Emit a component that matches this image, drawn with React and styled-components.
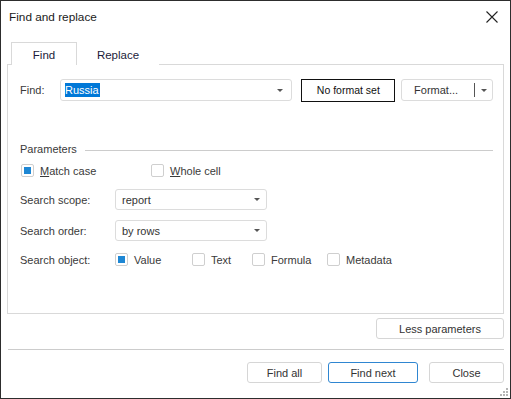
import React from 'react';
import styled, { createGlobalStyle } from 'styled-components';

const GlobalStyle = createGlobalStyle`
  html, body {
    margin: 0;
    padding: 0;
    background: #ffffff;
  }
  body {
    font-family: "Liberation Sans", Arial, sans-serif;
    color: #333333;
  }
`;

const Window = styled.div`
  box-sizing: border-box;
  width: 511px;
  height: 399px;
  border: 1px solid #2d2d2d;
  background: #ffffff;
  display: flex;
  flex-direction: column;
  position: relative;
`;

const TitleBar = styled.div`
  height: 31px;
  display: flex;
  align-items: center;
  justify-content: space-between;
  padding: 0 11px 0 8px;
  font-size: 11.8px;
  color: #1a1a1a;
`;

const CloseButton = styled.button`
  border: none;
  background: none;
  padding: 0;
  width: 14px;
  height: 14px;
  display: flex;
  align-items: center;
  justify-content: center;
  cursor: pointer;
`;

const Body = styled.div`
  padding: 0 6px;
  display: flex;
  flex-direction: column;
`;

const Tabs = styled.div`
  display: flex;
  margin-top: 10px;
  padding-left: 4px;
  position: relative;
  z-index: 1;
`;

const Tab = styled.div`
  box-sizing: border-box;
  width: ${p => p.$width}px;
  height: 23px;
  margin-bottom: -1px;
  display: flex;
  align-items: center;
  justify-content: center;
  font-size: 11.5px;
  color: #1c1c3a;
  background: #ffffff;
  border: 1px solid ${p => (p.$active ? '#d9d9d9' : 'transparent')};
  border-bottom: none;
  padding-top: 2px;
`;

const Panel = styled.div`
  box-sizing: border-box;
  height: 250px;
  border: 1px solid #d9d9d9;
  padding: 14px 10px 0 12px;
  display: flex;
  flex-direction: column;
`;

const Row = styled.div`
  display: flex;
  align-items: center;
  height: ${p => p.$height || 21}px;
  margin-top: ${p => p.$top || 0}px;
  font-size: 11px;
`;

const Label = styled.span`
  width: ${p => p.$width}px;
  flex-shrink: 0;
  color: #3a3a3a;
`;

const Combo = styled.div`
  box-sizing: border-box;
  width: ${p => p.$width}px;
  height: ${p => p.$height || 21}px;
  border: 1px solid #dcdcdc;
  border-radius: 3px;
  display: flex;
  align-items: center;
  justify-content: space-between;
  padding: 0 6px 0 ${p => p.$pad || 6}px;
  font-size: 11px;
  color: #333333;
`;

const Selected = styled.span`
  background: #0078d7;
  color: #ffffff;
  padding: 1px 1px 1px 0;
`;

const Arrow = styled.span`
  width: 0;
  height: 0;
  border-left: 3px solid transparent;
  border-right: 3px solid transparent;
  border-top: 3px solid #555555;
  margin-right: ${p => p.$right || 0}px;
`;

const FormatBox = styled.div`
  box-sizing: border-box;
  width: 94px;
  height: 23px;
  margin-left: 9px;
  border: 1px solid #111111;
  display: flex;
  align-items: center;
  justify-content: center;
  font-size: 10.5px;
  color: #111111;
`;

const SplitButton = styled.div`
  box-sizing: border-box;
  width: 92px;
  height: 22px;
  margin-left: 6px;
  border: 1px solid #dcdcdc;
  border-radius: 3px;
  display: flex;
  align-items: center;
  font-size: 11px;
  color: #333333;
`;

const SplitMain = styled.span`
  flex: 1;
  text-align: center;
  padding-right: 4px;
`;

const SplitDivider = styled.span`
  width: 1px;
  height: 14px;
  background: #555555;
`;

const SplitArrow = styled.span`
  width: 17px;
  display: flex;
  justify-content: center;
`;

const SectionHeader = styled.div`
  display: flex;
  align-items: center;
  height: 16px;
  margin-top: 40px;
  font-size: 11px;
  color: #3a3a3a;
`;

const SectionLine = styled.div`
  flex: 1;
  height: 1px;
  background: #cccccc;
  margin-left: 8px;
  margin-top: 2px;
`;

const CheckItem = styled.label`
  display: flex;
  align-items: center;
  width: ${p => (p.$width ? `${p.$width}px` : 'auto')};
  flex-shrink: 0;
  color: #3a3a3a;
  margin-left: ${p => p.$left || 0}px;
`;

const Box = styled.span`
  box-sizing: border-box;
  width: 13px;
  height: 13px;
  border: 1px solid #cfcfcf;
  border-radius: 2px;
  margin-right: 6px;
  display: flex;
  align-items: center;
  justify-content: center;
  background: #ffffff;

  &::after {
    content: '';
    display: ${p => (p.$checked ? 'block' : 'none')};
    width: 7px;
    height: 7px;
    background: #1e87d4;
  }
`;

const Footer = styled.div`
  display: flex;
  flex-direction: column;
`;

const ButtonRow = styled.div`
  display: flex;
  justify-content: flex-end;
  margin-top: ${p => p.$top}px;
`;

const Button = styled.button`
  box-sizing: border-box;
  width: ${p => p.$width}px;
  height: 21px;
  margin-left: ${p => p.$left || 0}px;
  padding: 0;
  background: #ffffff;
  border: 1px solid ${p => (p.$primary ? '#2f86d1' : '#d6d6d6')};
  border-radius: 3px;
  font-family: "Liberation Sans", Arial, sans-serif;
  font-size: 11px;
  color: #333333;
`;

const Separator = styled.div`
  height: 1px;
  background: #cccccc;
  margin: 10px 0 0 1px;
`;

const Grip = styled.svg`
  position: absolute;
  right: 1px;
  bottom: 1px;
`;

function Check({ checked, children, width, left }) {
  return (
    <CheckItem $width={width} $left={left}>
      <Box $checked={checked} />
      <span>{children}</span>
    </CheckItem>
  );
}

export default function App() {
  return (
    <>
      <GlobalStyle />
      <Window>
        <TitleBar>
          <span>Find and replace</span>
          <CloseButton aria-label="Close">
            <svg width="12" height="12" viewBox="0 0 12 12">
              <path d="M0.5 0.5 L11.5 11.5 M11.5 0.5 L0.5 11.5" stroke="#222" strokeWidth="1.1" />
            </svg>
          </CloseButton>
        </TitleBar>
        <Body>
          <Tabs>
            <Tab $active $width={66}>Find</Tab>
            <Tab $width={82}>Replace</Tab>
          </Tabs>
          <Panel>
            <Row $height={22}>
              <Label $width={40}>Find:</Label>
              <Combo $width={233} $height={22} $pad={4}>
                <Selected>Russia</Selected>
                <Arrow $right={2} />
              </Combo>
              <FormatBox>No format set</FormatBox>
              <SplitButton>
                <SplitMain>Format...</SplitMain>
                <SplitDivider />
                <SplitArrow><Arrow /></SplitArrow>
              </SplitButton>
            </Row>

            <SectionHeader>
              <span>Parameters</span>
              <SectionLine />
            </SectionHeader>

            <Row $height={13} $top={7}>
              <Check checked width={130} left={1}><u>M</u>atch case</Check>
              <Check><u>W</u>hole cell</Check>
            </Row>

            <Row $top={12}>
              <Label $width={95}>Search scope:</Label>
              <Combo $width={152}>
                <span>report</span>
                <Arrow />
              </Combo>
            </Row>

            <Row $top={10}>
              <Label $width={95}>Search order:</Label>
              <Combo $width={152}>
                <span>by rows</span>
                <Arrow />
              </Combo>
            </Row>

            <Row $top={8}>
              <Label $width={95}>Search object:</Label>
              <Check checked width={77}>Value</Check>
              <Check width={60}>Text</Check>
              <Check width={75}>Formula</Check>
              <Check>Metadata</Check>
            </Row>
          </Panel>

          <Footer>
            <ButtonRow $top={4}>
              <Button $width={128}>Less parameters</Button>
            </ButtonRow>
            <Separator />
            <ButtonRow $top={12}>
              <Button $width={75}>Find all</Button>
              <Button $width={90} $left={6} $primary>Find next</Button>
              <Button $width={75} $left={11}>Close</Button>
            </ButtonRow>
          </Footer>
        </Body>
        <Grip width="10" height="10" viewBox="0 0 10 10">
          <g fill="#b5b5b5">
            <rect x="7" y="1" width="2" height="2" />
            <rect x="4" y="4" width="2" height="2" />
            <rect x="7" y="4" width="2" height="2" />
            <rect x="1" y="7" width="2" height="2" />
            <rect x="4" y="7" width="2" height="2" />
            <rect x="7" y="7" width="2" height="2" />
          </g>
        </Grip>
      </Window>
    </>
  );
}
